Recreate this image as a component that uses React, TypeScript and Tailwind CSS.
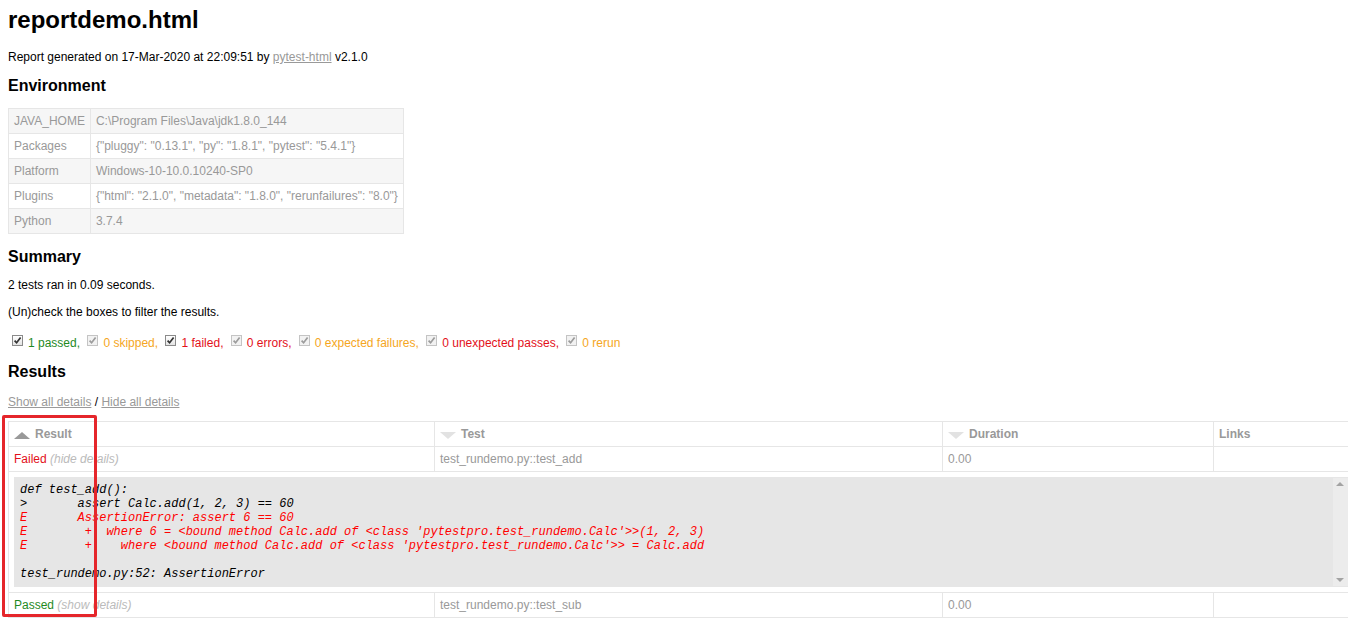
import React from 'react';

const envRows: [string, string][] = [
    ['JAVA_HOME', 'C:\\Program Files\\Java\\jdk1.8.0_144'],
    ['Packages', '{"pluggy": "0.13.1", "py": "1.8.1", "pytest": "5.4.1"}'],
    ['Platform', 'Windows-10-10.0.10240-SP0'],
    ['Plugins', '{"html": "2.1.0", "metadata": "1.8.0", "rerunfailures": "8.0"}'],
    ['Python', '3.7.4'],
];

const filters = [
    { label: '1 passed', color: 'text-[#1f8a1f]', on: true },
    { label: '0 skipped', color: 'text-[#f5a623]', on: false },
    { label: '1 failed', color: 'text-[#e3101a]', on: true },
    { label: '0 errors', color: 'text-[#e3101a]', on: false },
    { label: '0 expected failures', color: 'text-[#f5a623]', on: false },
    { label: '0 unexpected passes', color: 'text-[#e3101a]', on: false },
    { label: '0 rerun', color: 'text-[#f5a623]', on: false },
];

function CheckBox({ on }: { on: boolean }) {
    return (
        <span
            className={`inline-block w-[11px] h-[11px] align-[1px] ml-[4px] mr-[5px] border ${
                on ? 'border-[#8a8a8a] bg-gradient-to-b from-white to-[#e4e4e4]' : 'border-[#c4c4c4] bg-[#f2f2f2]'
            }`}
        >
            <svg viewBox="0 0 9 9" className="block w-[9px] h-[9px]">
                <path
                    d="M1.6 4.6 L3.6 6.8 L7.6 1.6"
                    fill="none"
                    stroke={on ? '#333' : '#9c9c9c'}
                    strokeWidth="1.7"
                />
            </svg>
        </span>
    );
}

function SortIcon({ dir }: { dir: 'up' | 'down' }) {
    return dir === 'up' ? (
        <span className="inline-block align-top mt-[5px] mr-[5px] w-0 h-0 border-x-[8px] border-x-transparent border-b-[7px] border-b-[#999]" />
    ) : (
        <span className="inline-block align-top mt-[5px] mr-[5px] w-0 h-0 border-x-[8px] border-x-transparent border-t-[7px] border-t-[#e2e2e2]" />
    );
}

const logLines: { text: string; error?: boolean }[] = [
    { text: 'def test_add():' },
    { text: '>       assert Calc.add(1, 2, 3) == 60' },
    { text: 'E       AssertionError: assert 6 == 60', error: true },
    { text: "E        +  where 6 = <bound method Calc.add of <class 'pytestpro.test_rundemo.Calc'>>(1, 2, 3)", error: true },
    { text: "E        +    where <bound method Calc.add of <class 'pytestpro.test_rundemo.Calc'>> = Calc.add", error: true },
    { text: '' },
    { text: 'test_rundemo.py:52: AssertionError' },
];

export default function App() {
    const cell = 'border border-[#e6e6e6] px-[5px] py-[5px] text-left align-top';

    return (
        <div className="min-h-screen overflow-x-hidden bg-white px-2 pb-2 font-['Liberation_Sans',Arial,sans-serif] text-[12px] leading-[14px] text-[#999]">
            {/* Header */}
            <h1 className="mt-[6px] text-[24px] leading-[28px] font-bold text-black">reportdemo.html</h1>
            <p className="mt-[16px] text-black">
                Report generated on 17-Mar-2020 at 22:09:51 by{' '}
                <a href="#" className="text-[#999] underline">pytest-html</a> v2.1.0
            </p>

            {/* Environment */}
            <h2 className="mt-[12px] text-[16px] leading-[20px] font-bold text-black">Environment</h2>
            <table className="mt-[12px] border-collapse">
                <tbody>
                    {envRows.map(([k, v], i) => (
                        <tr key={k} className={i % 2 === 0 ? 'bg-[#f6f6f6]' : 'bg-white'}>
                            <td className={cell}>{k}</td>
                            <td className={cell}>{v}</td>
                        </tr>
                    ))}
                </tbody>
            </table>

            {/* Summary */}
            <h2 className="mt-[13px] text-[16px] leading-[20px] font-bold text-black">Summary</h2>
            <p className="mt-[11px] text-black">2 tests ran in 0.09 seconds. </p>
            <p className="mt-[13px] text-black">(Un)check the boxes to filter the results.</p>
            <p className="mt-[16px] whitespace-nowrap">
                {filters.map((f, i) => (
                    <React.Fragment key={f.label}>
                        <CheckBox on={f.on} />
                        <span className={f.color}>
                            {f.label}
                            {i < filters.length - 1 ? ', ' : ''}
                        </span>
                    </React.Fragment>
                ))}
            </p>

            {/* Results */}
            <h2 className="mt-[12px] text-[16px] leading-[20px] font-bold text-black">Results</h2>
            <p className="mt-[13px] text-black">
                <a href="#" className="text-[#999] underline">Show all details</a> /{' '}
                <a href="#" className="text-[#999] underline">Hide all details</a>
            </p>

            <div className="relative mt-[12px] w-[1348px]">
                <table className="w-[1348px] table-fixed border-collapse border border-[#e6e6e6]">
                    <colgroup>
                        <col className="w-[426px]" />
                        <col className="w-[508px]" />
                        <col className="w-[271px]" />
                        <col className="w-[143px]" />
                    </colgroup>
                    <thead>
                        <tr>
                            <th className={`${cell} font-bold`}>
                                <SortIcon dir="up" />
                                Result
                            </th>
                            <th className={`${cell} font-bold`}>
                                <SortIcon dir="down" />
                                Test
                            </th>
                            <th className={`${cell} font-bold`}>
                                <SortIcon dir="down" />
                                Duration
                            </th>
                            <th className={`${cell} font-bold`}>Links</th>
                        </tr>
                    </thead>
                    <tbody>
                        <tr>
                            <td className={cell}>
                                <span className="text-[#e3101a]">Failed</span>
                                <span className="italic text-[#bbb]"> (hide details)</span>
                            </td>
                            <td className={cell}>test_rundemo.py::test_add</td>
                            <td className={cell}>0.00</td>
                            <td className={cell}></td>
                        </tr>
                        <tr>
                            <td colSpan={4} className={cell}>
                                <div className="box-border flex h-[110px] border border-[#e6e6e6] bg-[#e6e6e6]">
                                    <div className="flex-1 overflow-hidden whitespace-pre-wrap p-[5px] font-['Liberation_Mono','Courier_New',monospace] text-[12px] italic leading-[14px] text-black">
                                        {logLines.map((l, i) => (
                                            <div key={i} className={l.error ? 'text-[#f00]' : ''}>
                                                {l.text === '' ? '\u00a0' : l.text}
                                            </div>
                                        ))}
                                    </div>
                                    {/* scrollbar */}
                                    <div className="flex w-[17px] flex-col items-center justify-between bg-[#ececec] py-[4px] pr-[4px]">
                                        <span className="h-0 w-0 border-x-[4px] border-x-transparent border-b-[4px] border-b-[#a3a3a3]" />
                                        <span className="h-0 w-0 border-x-[4px] border-x-transparent border-t-[4px] border-t-[#a3a3a3]" />
                                    </div>
                                </div>
                            </td>
                        </tr>
                        <tr>
                            <td className={cell}>
                                <span className="text-[#1f8a1f]">Passed</span>
                                <span className="italic text-[#bbb]"> (show details)</span>
                            </td>
                            <td className={cell}>test_rundemo.py::test_sub</td>
                            <td className={cell}>0.00</td>
                            <td className={cell}></td>
                        </tr>
                    </tbody>
                </table>

                {/* annotation box */}
                <div className="pointer-events-none absolute left-[-6px] top-[-6px] h-[202px] w-[95px] rounded-[2px] border-[3px] border-[#e5262b]" />
            </div>
        </div>
    );
}
